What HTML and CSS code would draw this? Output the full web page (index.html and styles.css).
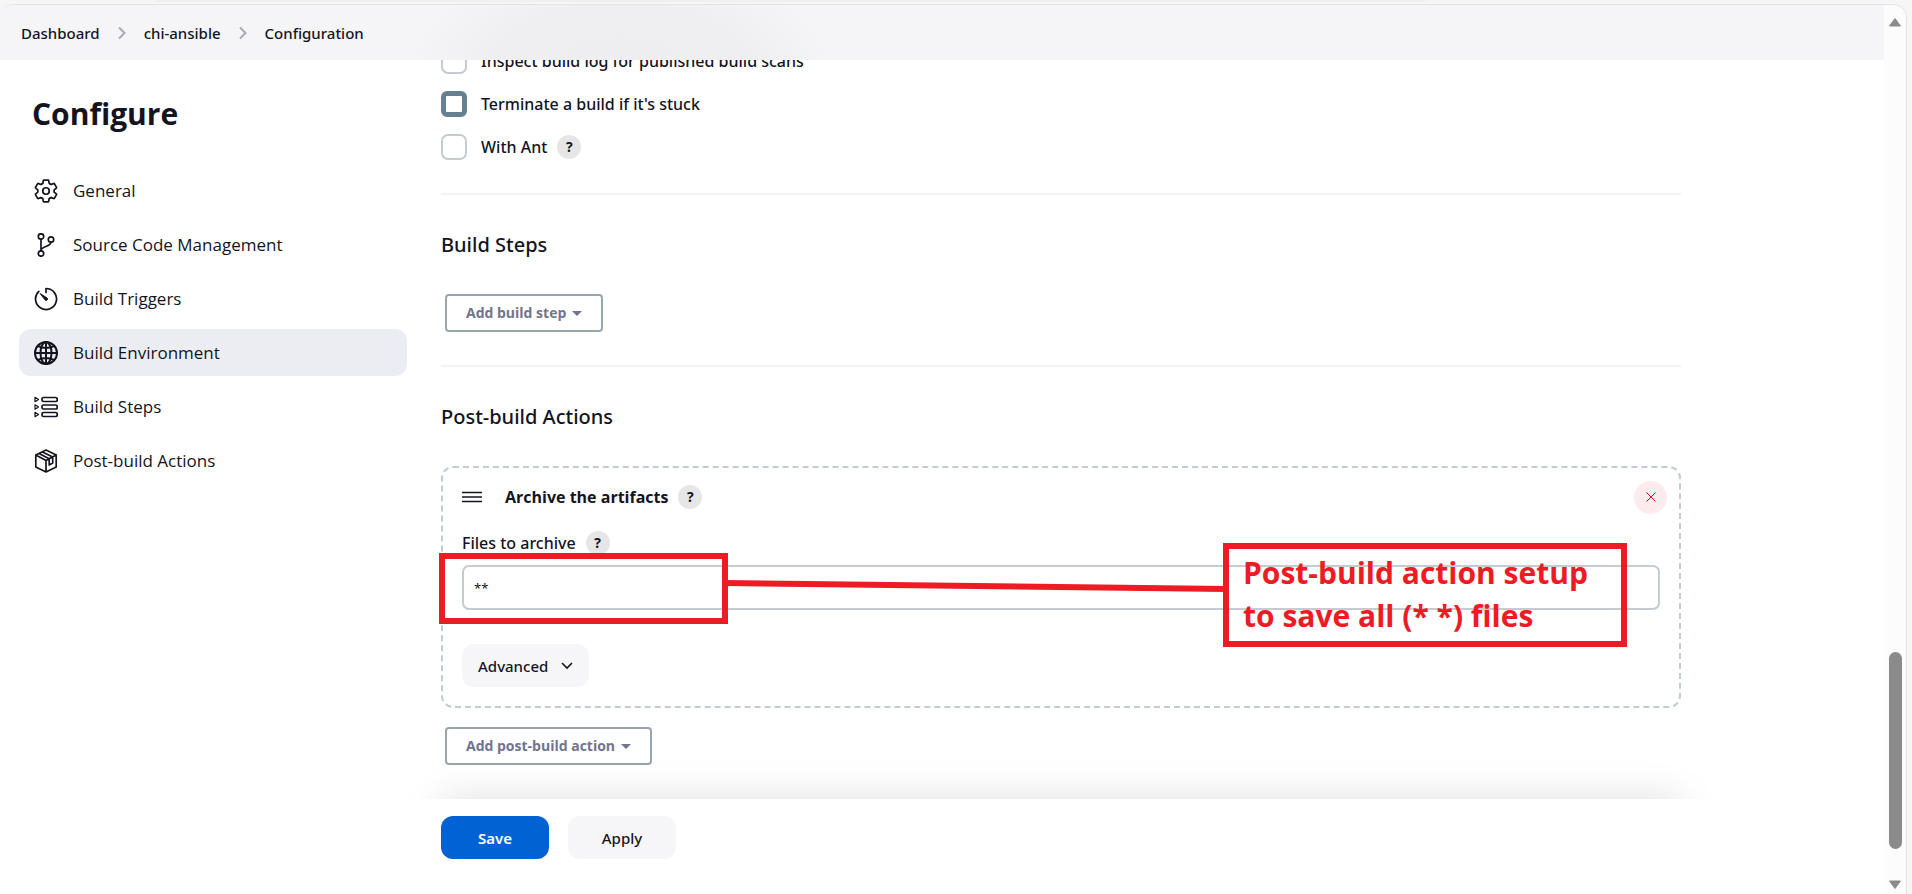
FILE: index.html
```html
<!DOCTYPE html>
<html lang="en">
<head>
<meta charset="utf-8">
<title>chi-ansible Configuration</title>
<link rel="stylesheet" href="styles.css">
</head>
<body>
<div class="window">
  <div class="viewport">
    <nav class="breadcrumbs" aria-label="Breadcrumb">
      <a href="#">Dashboard</a>
      <svg class="crumb-sep" viewBox="0 0 8 14"><path d="M1 1.500 6.500 7 1 12.500"/></svg>
      <a href="#">chi-ansible</a>
      <svg class="crumb-sep" viewBox="0 0 8 14"><path d="M1 1.500 6.500 7 1 12.500"/></svg>
      <a href="#">Configuration</a>
    </nav>
    <div class="page">
      <aside class="sidebar">
        <h1>Configure</h1>
        <ul class="tasks">
          <li><a href="#"><svg viewBox="20 20 472 472" class="icon gear"><circle cx="256" cy="256" r="64"/><path d="M416.39 256a154.34 154.34 0 01-1.53 20.79l45.21 35.46a10.81 10.81 0 012.45 13.75l-42.77 74a10.81 10.81 0 01-13.14 4.590l-44.900-18.080a16.110 16.110 0 00-15.170 1.750A164.480 164.480 0 01325 400.800a15.940 15.940 0 00-8.820 12.140l-6.730 47.890a11.080 11.080 0 01-10.680 9.170h-85.540a11.110 11.110 0 01-10.690-8.870l-6.720-47.820a16.070 16.070 0 00-9-12.220 155.300 155.300 0 01-21.460-12.570 16 16 0 00-15.110-1.710l-44.890 18.070a10.810 10.810 0 01-13.140-4.580l-42.770-74a10.800 10.800 0 012.450-13.750l38.210-30a16.050 16.050 0 006-14.080c-.36-4.170-.58-8.330-.58-12.500s.21-8.270.58-12.350a16 16 0 00-6.070-13.940l-38.190-30A10.810 10.810 0 0149.480 186l42.770-74a10.810 10.810 0 0113.140-4.590l44.900 18.080a16.110 16.110 0 0015.170-1.750A164.480 164.480 0 01187 111.200a15.940 15.940 0 008.820-12.140l6.730-47.890A11.080 11.080 0 01213.230 42h85.540a11.110 11.110 0 0110.690 8.870l6.720 47.820a16.070 16.070 0 009 12.220 155.300 155.300 0 0121.460 12.570 16 16 0 0015.110 1.710l44.890-18.070a10.810 10.810 0 0113.140 4.580l42.770 74a10.800 10.800 0 01-2.450 13.750l-38.210 30a16.050 16.050 0 00-6.050 14.080c.33 4.140.55 8.300.55 12.470z"/></svg>General</a></li>
          <li><a href="#"><svg viewBox="0 0 24 24" class="icon"><circle cx="7" cy="3.500" r="2.700"/><circle cx="7" cy="20.500" r="2.700"/><circle cx="17" cy="6.500" r="2.700"/><path d="M7 6.200v11.600M17 9.200c-.5 5-9 3.500-10 8"/></svg>Source Code Management</a></li>
          <li><a href="#"><svg viewBox="0 0 24 24" class="icon"><path d="M12 5.500V1.500a10.500 10.500 0 1 1-7.200 2.900"/><path d="m6.500 6.800 6.600 4.200a1.400 1.400 0 0 1-2 2z" class="solid"/></svg>Build Triggers</a></li>
          <li><a href="#" class="active" aria-current="true"><svg viewBox="0 0 24 24" class="icon globe"><circle cx="12" cy="12" r="11"/><ellipse cx="12" cy="12" rx="5.500" ry="11"/><path d="M12 1v22M1 12h22M4 5c5 2.500 11 2.500 16 0M4 19c5-2.500 11-2.500 16 0"/></svg>Build Environment</a></li>
          <li><a href="#"><svg viewBox="0 0 24 24" class="icon"><rect x="8" y="2.500" width="15.200" height="4" rx="1.500"/><rect x="8" y="10" width="15.200" height="4" rx="1.500"/><rect x="8" y="17.500" width="15.200" height="4" rx="1.500"/><path class="fine" d="M1 2.300 4.500 4.500 1 6.700zM1 9.800 4.500 12 1 14.200zM1 17.300l3.500 2.200L1 21.700z"/></svg>Build Steps</a></li>
          <li><a href="#"><svg viewBox="0 0 24 24" class="icon"><path d="M12 1 22.200 6v12L12 23 1.800 18V6zM1.800 6 12 11.500 22.200 6M12 11.500V23M5 4.600l10.200 5.200M8.500 2.900l10.200 5.200v6l-3.500 1.800V9.800"/></svg>Post-build Actions</a></li>
        </ul>
      </aside>
      <main class="content">
        <form class="config" action="#">
          <div class="checks">
            <div class="check"><input type="checkbox" id="c1"><label for="c1">Inspect build log for published build scans</label></div>
            <div class="check"><input type="checkbox" id="c2" class="pressed"><label for="c2">Terminate a build if it's stuck</label></div>
            <div class="check"><input type="checkbox" id="c3"><label for="c3">With Ant</label><button type="button" class="help" aria-label="Help for With Ant">?</button></div>
          </div>
          <section class="section">
            <h2>Build Steps</h2>
            <button type="button" class="add">Add build step<span class="caret"></span></button>
          </section>
          <section class="section">
            <h2>Post-build Actions</h2>
            <div class="chunk">
              <div class="chunk-head">
                <svg class="grip" viewBox="0 0 20 12"><path d="M0 1.500h20M0 6h20M0 10.500h20"/></svg>
                <strong>Archive the artifacts</strong>
                <button type="button" class="help" aria-label="Help for Archive the artifacts">?</button>
                <button type="button" class="delete" aria-label="Delete"><svg viewBox="0 0 10 10"><path d="m.5.5 9 9M9.500.5l-9 9"/></svg></button>
              </div>
              <div class="label-row"><label for="files">Files to archive</label><button type="button" class="help" aria-label="Help for Files to archive">?</button></div>
              <div class="field">
                <input type="text" id="files" value="**">
                <div class="mark"></div>
                <svg class="leader" viewBox="0 0 504 14"><path d="M0 4 504 10"/></svg>
                <p class="callout">Post-build action setup<br>to save all (* *) files</p>
              </div>
              <button type="button" class="btn advanced">Advanced<svg viewBox="0 0 12 8"><path d="m1 1 5 5 5-5"/></svg></button>
            </div>
            <button type="button" class="add">Add post-build action<span class="caret"></span></button>
          </section>
        </form>
        <div class="bottom">
          <div class="bottom-shade"></div>
          <button type="submit" class="btn save">Save</button>
          <button type="button" class="btn">Apply</button>
        </div>
      </main>
    </div>
  </div>
  <div class="scrollbar" aria-hidden="true">
    <svg viewBox="0 0 14 10"><path d="M7 1.500 12.500 9h-11z"/></svg>
    <div class="track"><div class="thumb"></div></div>
    <svg viewBox="0 0 14 10"><path d="M7 8.500 1.500 1h11z"/></svg>
  </div>
</div>
</body>
</html>
```
FILE: styles.css
```css
* { box-sizing: border-box; }

body {
  margin: 0;
  height: 100vh;
  overflow: hidden;
  padding: 4px 5px 0 0;
  background: linear-gradient(#efefef, #efefef) 155px 0 / 1270px 2px no-repeat #f6f6f6;
  color: #14141f;
  font: 500 16px/24px "Noto Sans", "Open Sans", sans-serif;
}

button, input { font: inherit; color: inherit; margin: 0; }
a { color: inherit; text-decoration: none; }
svg { fill: none; stroke: currentColor; flex: none; }

.window {
  display: flex;
  height: 100%;
  border: 1px solid #e4e4e6;
  border-width: 1px 1px 0 0;
  border-radius: 14px 14px 0 0;
  background: #fff;
  overflow: hidden;
}

.viewport { flex: 1; min-width: 0; display: flex; flex-direction: column; }

.breadcrumbs {
  display: flex;
  align-items: center;
  gap: 18px;
  height: 55px;
  padding: 0 21px;
  font-size: 15px;
  background:
    radial-gradient(ellipse 210px 100px at 620px 60px, #eeeef1 0%, #efeff2 60%, #efeff200 100%),
    #f5f5f8;
}
.crumb-sep { width: 8px; height: 14px; stroke: #a9a9b8; stroke-width: 2; }

.page { flex: 1; min-height: 0; display: flex; }

.sidebar { width: 407px; flex: none; padding: 32px 0 0 19px; font-family: "Open Sans", sans-serif; }
.sidebar h1 {
  margin: 0 0 31px 13px;
  font-size: 30px;
  line-height: 44px;
  font-weight: 700;
}

.tasks { list-style: none; margin: 0; padding: 0; display: grid; gap: 7px; font-size: 17px; }
.tasks a {
  display: flex;
  align-items: center;
  gap: 15px;
  height: 47px;
  padding: 0 15px;
  border-radius: 12px;
}
.tasks .active { background: #ecedf3; }
.icon { width: 24px; height: 24px; stroke-width: 1.7; stroke-linecap: round; stroke-linejoin: round; }
.icon.gear { stroke-width: 34; }
.icon.globe { stroke-width: 2; }
.icon .solid { fill: currentColor; stroke-width: 1; }
.icon .fine { stroke-width: 1.2; }

.content {
  flex: 1;
  min-width: 0;
  padding: 0 34px;
  display: flex;
  flex-direction: column;
  overflow: hidden;
}
.config { flex: 1; min-height: 0; max-width: 1240px; }

.checks { margin-top: -21px; padding-bottom: 25px; }
.check { display: flex; align-items: center; height: 43px; }
.check input {
  appearance: none;
  width: 26px;
  height: 26px;
  margin-right: 14px;
  border: 2px solid #c3ccd1;
  border-radius: 7px;
  background: #fff;
}
.check input.pressed { border: 5px solid #668090; border-radius: 6px; }

.help {
  width: 24px;
  height: 24px;
  margin-left: 10px;
  padding: 0;
  border: 0;
  border-radius: 50%;
  background: #e6e6e6;
  font-size: 14px;
  line-height: 24px;
  font-weight: 700;
}

.section { border-top: 2px solid #f2f2f8; padding: 34px 0 33px; }
.section h2 { margin: 0 0 33px; font-size: 20px; line-height: 32px; font-weight: 500; }

.add {
  display: flex;
  align-items: center;
  gap: 6px;
  height: 38px;
  margin-left: 4px;
  padding: 0 19px;
  border: 2px solid #98a5ad;
  border-radius: 4px;
  background: #fff;
  color: #73738c;
  font-family: "Open Sans", sans-serif;
  font-size: 14px;
  font-weight: 700;
}
.caret { border: 5px solid transparent; border-top-color: currentColor; border-bottom: 0; }

.chunk {
  margin-bottom: 19px;
  padding: 12px 19px 19px;
  border: 2px dashed #c3ccd1;
  border-radius: 12px;
}
.chunk-head { display: flex; align-items: center; height: 34px; }
.chunk-head strong { font-family: "Open Sans", sans-serif; font-weight: 700; }
.grip { width: 20px; height: 12px; stroke-width: 1.5; margin-right: 23px; }
.delete {
  display: grid;
  place-items: center;
  width: 33px;
  height: 33px;
  margin: 0 -7px 0 auto;
  padding: 0;
  border: 0;
  border-radius: 50%;
  background: #fdebed;
  color: #e6002b;
}
.delete svg { width: 10px; height: 10px; }

.label-row { display: flex; align-items: center; height: 24px; margin: 17px 0 10px; }

.field { position: relative; }
.field input {
  display: block;
  width: 100%;
  height: 45px;
  padding: 0 10px;
  border: 2px solid #c3ccd1;
  border-radius: 7px;
  background: #fff;
  font-size: 13px;
  font-weight: 400;
}
.mark {
  position: absolute;
  left: -23px;
  top: -12px;
  width: 289px;
  height: 71px;
  border: 6px solid #ed1c24;
}
.leader {
  position: absolute;
  left: 261px;
  top: 14px;
  width: 504px;
  height: 14px;
  stroke: #ed1c24;
  stroke-width: 6;
}
.callout {
  position: absolute;
  left: 761px;
  top: -22px;
  width: 404px;
  height: 104px;
  margin: 0;
  padding: 2px 14px;
  border: 6px solid #ed1c24;
  color: #ed1c24;
  font-family: "Open Sans", sans-serif;
  font-size: 30px;
  line-height: 43px;
  font-weight: 700;
  white-space: nowrap;
}

.btn {
  min-width: 108px;
  height: 43px;
  padding: 0 16px;
  border: 0;
  border-radius: 12px;
  background: #f6f6f9;
  font-size: 15px;
}
.btn.save { background: #0062d3; color: #fff; font-weight: 600; }
.advanced { display: flex; align-items: center; gap: 13px; margin-top: 34px; }
.advanced svg { width: 12px; height: 8px; stroke-width: 1.6; }

.bottom {
  position: relative;
  display: flex;
  gap: 19px;
  max-width: 1240px;
  padding: 17px 0 35px;
  background: #fff;
}
.bottom-shade {
  position: absolute;
  left: -34px;
  right: -34px;
  bottom: 100%;
  height: 40px;
  overflow: hidden;
  pointer-events: none;
}
.bottom-shade::before {
  content: "";
  position: absolute;
  top: 100%;
  left: 34px;
  right: 34px;
  height: 95px;
  box-shadow: 0 0 40px rgba(0, 0, 0, .13);
}

.scrollbar {
  display: flex;
  flex-direction: column;
  align-items: center;
  width: 22px;
  padding: 12px 0 4px;
  background: #fcfcfc;
}
.scrollbar svg { width: 14px; height: 10px; fill: #8b8b8b; stroke: #8b8b8b; stroke-linejoin: round; }
.track { flex: 1; display: flex; flex-direction: column; justify-content: flex-end; padding-bottom: 31px; }
.thumb { width: 13px; height: 24%; border-radius: 7px; background: #8b8b8b; }
```
